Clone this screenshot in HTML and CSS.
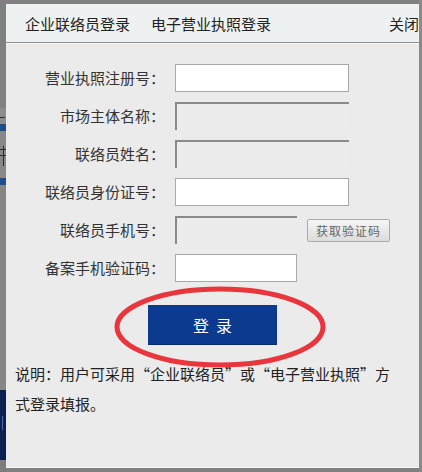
FILE: index.html
```html
<!DOCTYPE html>
<html lang="zh-CN">
<head>
<meta charset="utf-8">
<title>企业联络员登录</title>
<link rel="stylesheet" href="styles.css">
</head>
<body>
<div class="screen">
  <div class="strip-left">
    <div class="sl sl-a"></div>
    <div class="sl sl-b"><i class="mark mark-b"></i></div>
    <div class="sl sl-bar"></div>
    <div class="sl sl-c"><i class="mark mark-c1"></i><i class="mark mark-c2"></i><i class="mark mark-c3"></i></div>
    <div class="sl sl-bar"></div>
    <div class="sl sl-d"></div>
    <div class="sl sl-navy"><i class="mark mark-y"></i></div>
    <div class="sl sl-e"></div>
  </div>
  <div class="dialog-col">
    <div class="dialog">
      <div class="dlg-head">
        <span class="tab">企业联络员登录</span>
        <span class="tab">电子营业执照登录</span>
        <span class="close">关闭</span>
      </div>
      <div class="form">
        <label class="lbl">营业执照注册号：</label>
        <div class="field"><input class="inp" type="text"></div>
        <label class="lbl">市场主体名称：</label>
        <div class="field"><input class="inp inp-dis" type="text" disabled></div>
        <label class="lbl">联络员姓名：</label>
        <div class="field"><input class="inp inp-dis" type="text" disabled></div>
        <label class="lbl">联络员身份证号：</label>
        <div class="field"><input class="inp" type="text"></div>
        <label class="lbl">联络员手机号：</label>
        <div class="field"><input class="inp inp-short inp-dis" type="text" disabled><button class="code-btn" type="button">获取验证码</button></div>
        <label class="lbl">备案手机验证码：</label>
        <div class="field"><input class="inp inp-short" type="text"></div>
      </div>
      <div class="submit-row"><button class="login" type="button">登录</button></div>
      <p class="note">说明：用户可采用“企业联络员”或“电子营业执照”方式登录填报。</p>
      <svg class="annotation" width="216" height="86" viewBox="0 0 216 86">
        <ellipse cx="108" cy="43" rx="103" ry="38" fill="none" stroke="#e8363c" stroke-width="5"/>
      </svg>
    </div>
  </div>
  <div class="strip-right"></div>
</div>
</body>
</html>
```

FILE: styles.css
```css
html, body {
  margin: 0;
  padding: 0;
}
body {
  background: #7f7f7f;
  font-family: "Noto Sans CJK SC", "Noto Sans", sans-serif;
  color: #222;
}
.screen {
  display: flex;
  width: 422px;
  height: 472px;
  background: #808080;
  overflow: hidden;
}
.strip-left {
  width: 6px;
  display: flex;
  flex-direction: column;
  overflow: hidden;
}
.sl { width: 6px; overflow: hidden; position: relative; }
.sl-a { height: 108px; background: #808080; }
.sl-b { height: 16px; background: #8d8d8d; }
.sl-bar { height: 7px; background: #1d4d8c; }
.sl-c { height: 47px; background: #888; }
.sl-d { height: 205px; background: #858585; }
.sl-navy { height: 70px; background: #0d2052; }
.sl-e { flex: 1; background: #7c7c7c; }
.mark {
  position: absolute;
  display: block;
  background: #2a2a2a;
}
.mark-b { left: 0; top: 9px; width: 5px; height: 1px; }
.mark-c1 { left: 0; top: 18px; width: 6px; height: 1px; }
.mark-c2 { left: 0; top: 24px; width: 6px; height: 1px; }
.mark-c3 { left: 3px; top: 15px; width: 1px; height: 20px; }
.mark-y { left: 2px; top: 26px; width: 1px; height: 14px; background: #4a6aa8; }

.dialog-col {
  width: 413px;
  padding: 4px 0;
  box-sizing: border-box;
}
.dialog {
  position: relative;
  height: 464px;
  background: #ebebeb;
  border-bottom: 1px solid #f7f7f7;
  box-sizing: border-box;
}
.dlg-head {
  display: flex;
  align-items: center;
  height: 38px;
  padding-left: 19px;
  background: #eef1f1;
  border-bottom: 1px solid #8f8f8f;
  box-shadow: 0 1px 0 #f8f8f8;
  font-size: 15px;
  color: #222;
}
.tab { margin-right: 21px; }
.close { margin-left: auto; }

.form {
  display: grid;
  grid-template-columns: 159px 1fr;
  column-gap: 10px;
  row-gap: 10px;
  padding-top: 21px;
  align-items: center;
}
.lbl {
  text-align: right;
  font-size: 15px;
  color: #333;
  line-height: 28px;
}
.field {
  display: flex;
  align-items: center;
  height: 28px;
}
.inp {
  box-sizing: border-box;
  width: 174px;
  height: 28px;
  margin: 0;
  padding: 0 4px;
  background: #fff;
  border: 1px solid #a8a8a8;
  border-radius: 0;
  outline: none;
}
.inp-short { width: 122px; }
.inp-dis {
  background: #ececec;
  border: 0;
  border-top: 2px solid #8a8a8a;
  border-left: 2px solid #8a8a8a;
}
.code-btn {
  box-sizing: border-box;
  margin-left: 10px;
  width: 83px;
  height: 23px;
  padding: 0;
  font-family: "Noto Sans CJK SC", sans-serif;
  font-size: 12px;
  color: #666;
  letter-spacing: 1px;
  background: linear-gradient(#f6f6f6, #dcdcdc);
  border: 1px solid #ababab;
  border-radius: 2px;
}
.submit-row {
  display: flex;
  justify-content: center;
  padding-top: 23px;
}
.login {
  width: 129px;
  height: 40px;
  padding: 0;
  background: #0b3a8e;
  border: 0;
  border-bottom: 1px solid #062a6a;
  color: #fff;
  font-family: "Noto Sans CJK SC", sans-serif;
  font-size: 16px;
  letter-spacing: 7px;
  text-indent: 7px;
}
.note {
  margin: 14px 20px 0 9px;
  font-size: 15px;
  line-height: 30px;
  color: #222;
}
.annotation {
  position: absolute;
  left: 106px;
  top: 280px;
}

.strip-right {
  width: 3px;
  background: #8a8a8a;
}
```
